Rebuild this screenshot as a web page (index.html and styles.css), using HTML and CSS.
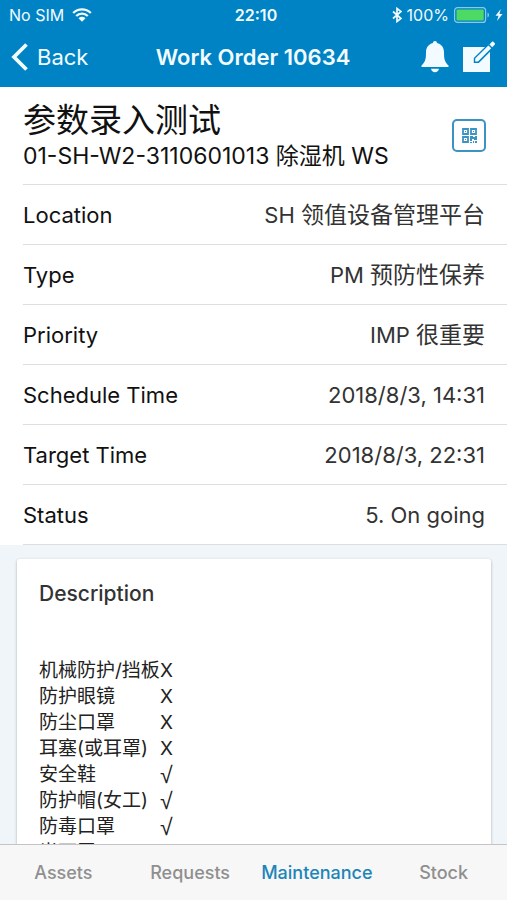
FILE: index.html
```html
<!DOCTYPE html>
<html lang="en">
<head>
<meta charset="utf-8">
<meta name="viewport" content="width=device-width, initial-scale=1">
<title>Work Order 10634</title>
<link rel="stylesheet" href="styles.css">
</head>
<body>
<header class="header">
  <div class="status">
    <div class="status-side">
      <span>No SIM</span>
      <svg class="wifi" viewBox="0 0 20 14" aria-hidden="true">
        <path d="M1.200 5a12.500 12.500 0 0 1 17.600 0M4.200 8a8.300 8.300 0 0 1 11.600 0" fill="none" stroke="currentColor" stroke-width="2.300"/>
        <path d="M6.500 10.200a5 5 0 0 1 7 0L10 13.800z" fill="currentColor"/>
      </svg>
    </div>
    <span class="clock">22:10</span>
    <div class="status-side status-end">
      <svg class="bluetooth" viewBox="0 0 10 16" aria-hidden="true">
        <path d="M1 4.500l8 7-4 3V1.500l4 3-8 7" fill="none" stroke="currentColor" stroke-width="1.700"/>
      </svg>
      <span>100%</span>
      <svg class="battery" viewBox="0 0 36 16" aria-hidden="true">
        <rect x=".6" y=".6" width="31" height="14.800" rx="3" fill="none" stroke="#8cc8e6" stroke-width="1.200"/>
        <rect x="2.500" y="2.500" width="27.200" height="11" rx="1" fill="#4cd964"/>
        <path d="M33.500 5.500c2 .8 2 4.200 0 5z" fill="#8cc8e6"/>
      </svg>
      <svg class="bolt" viewBox="0 0 8 12" aria-hidden="true"><path d="M5.800 0L.5 6.800h3L2 12l5.500-7H4.400z" fill="currentColor"/></svg>
    </div>
  </div>
  <div class="nav">
    <button class="back" type="button">
      <svg viewBox="0 0 18 28" aria-hidden="true"><path d="M15.500 1.500L3 14l12.500 12.500" fill="none" stroke="currentColor" stroke-width="3.800"/></svg>
      <span>Back</span>
    </button>
    <h1>Work Order 10634</h1>
    <div class="actions">
      <button type="button" aria-label="Notifications">
        <svg class="bell" viewBox="0 0 28 32" aria-hidden="true">
          <path d="M14 0c-1.300 0-2 .9-2 2C7.500 3 5 6.700 5 11.300c0 6.700-.6 9.700-4.500 13.200V26h27v-1.500C23.600 21 23 18 23 11.300 23 6.700 20.500 3 16 2c0-1.100-.7-2-2-2zM10 27.800c.4 2 2 3.400 4 3.400s3.600-1.400 4-3.400z" fill="currentColor"/>
        </svg>
      </button>
      <button type="button" aria-label="Edit">
        <svg class="edit" viewBox="0 0 32 32" aria-hidden="true">
          <path d="M0 6h22L10.800 17v5h5L27 10.800V31H0z" fill="currentColor"/>
          <path d="M12.200 17.600L25.400 4.400l2.800 2.800L15 20.400h-2.800zM26.400 3.400l2.400-2.400c.6-.6 1.100-.6 1.700 0l1.100 1.100c.6.6.6 1.100 0 1.700l-2.400 2.400z" fill="currentColor"/>
        </svg>
      </button>
    </div>
  </div>
</header>

<main class="content">
  <section class="sheet">
    <div class="summary">
      <div>
        <h2 lang="zh-CN">参数录入测试</h2>
        <p>01-SH-W2-3110601013 除湿机 WS</p>
      </div>
      <button class="qr" type="button" aria-label="Scan code">
        <svg viewBox="0 0 15 15" aria-hidden="true">
          <path d="M1 1h5v5H1zM9 1h5v5H9zM1 9h5v5H1z" fill="none" stroke="currentColor" stroke-width="1.800"/>
          <path d="M3 3h1v1H3zM11 3h1v1h-1zM3 11h1v1H3zM8 8h3v1h2V8h2v4h-3v-1h-2v2H8zM8 14h2v1H8zM11 13h1v2h-1zM13 13h2v2h-2z" fill="currentColor"/>
        </svg>
      </button>
    </div>
    <dl class="fields">
      <div class="field"><dt>Location</dt><dd>SH <span lang="zh-CN">领值设备管理平台</span></dd></div>
      <div class="field"><dt>Type</dt><dd>PM <span lang="zh-CN">预防性保养</span></dd></div>
      <div class="field"><dt>Priority</dt><dd>IMP <span lang="zh-CN">很重要</span></dd></div>
      <div class="field"><dt>Schedule Time</dt><dd>2018/8/3, 14:31</dd></div>
      <div class="field"><dt>Target Time</dt><dd>2018/8/3, 22:31</dd></div>
      <div class="field"><dt>Status</dt><dd>5. On going</dd></div>
    </dl>
  </section>

  <section class="card">
    <h3>Description</h3>
    <table class="checks" lang="zh-CN">
      <tbody>
        <tr><th scope="row">机械防护/挡板</th><td>X</td></tr>
        <tr><th scope="row">防护眼镜</th><td>X</td></tr>
        <tr><th scope="row">防尘口罩</th><td>X</td></tr>
        <tr><th scope="row">耳塞(或耳罩)</th><td>X</td></tr>
        <tr><th scope="row">安全鞋</th><td class="tick">√</td></tr>
        <tr><th scope="row">防护帽(女工)</th><td class="tick">√</td></tr>
        <tr><th scope="row">防毒口罩</th><td class="tick">√</td></tr>
        <tr><th scope="row">半面罩</th><td></td></tr>
      </tbody>
    </table>
  </section>
</main>

<nav class="tabs">
  <a href="#assets">Assets</a>
  <a href="#requests">Requests</a>
  <a href="#maintenance" class="active" aria-current="page">Maintenance</a>
  <a href="#stock">Stock</a>
</nav>
</body>
</html>
```
FILE: styles.css
```css
* {
  box-sizing: border-box;
  margin: 0;
  padding: 0;
}

body {
  display: flex;
  flex-direction: column;
  height: 100vh;
  overflow: hidden;
  background: #f0f5f9;
  color: #111;
  font: 22px/28px Inter, "Noto Sans CJK SC", sans-serif;
}

button {
  border: 0;
  background: none;
  color: inherit;
  font: inherit;
}

svg {
  display: block;
  flex: none;
}

h1, h2, h3, th {
  font-weight: 400;
}

.header {
  flex: none;
  background: #0083c5;
  color: #f2fbff;
}

.status {
  display: flex;
  align-items: center;
  height: 28px;
  padding: 2px 4px 0 9px;
  font-size: 16px;
  line-height: 24px;
}

.status-side {
  display: flex;
  flex: 1;
  align-items: center;
  gap: 8px;
}

.status-end {
  justify-content: flex-end;
  gap: 5px;
}

.clock {
  font-weight: 600;
}

.wifi {
  width: 20px;
  height: 14px;
}

.bluetooth {
  width: 10px;
  height: 16px;
}

.battery {
  width: 36px;
  height: 16px;
}

.bolt {
  width: 8px;
  height: 12px;
}

.nav {
  display: grid;
  grid-template-columns: 1fr auto 1fr;
  align-items: center;
  height: 59px;
  padding: 0 12px 2px 11px;
}

.nav h1 {
  font-size: 22px;
  font-weight: 600;
}

.back {
  display: flex;
  align-items: center;
  gap: 8px;
}

.back svg {
  width: 18px;
  height: 28px;
}

.actions {
  display: flex;
  justify-content: flex-end;
  gap: 14px;
}

.bell {
  width: 28px;
  height: 32px;
}

.edit {
  width: 32px;
  height: 32px;
}

.content {
  flex: 1;
  min-height: 0;
  overflow: hidden;
}

.sheet {
  padding-left: 23px;
  background: #fff;
}

.summary {
  display: flex;
  align-items: center;
  justify-content: space-between;
  height: 98px;
  padding-right: 21px;
  border-bottom: 1px solid #dedede;
}

.summary h2 {
  font-size: 33px;
  line-height: 40px;
}

.summary p {
  font-size: 23px;
  line-height: 32px;
}

.qr {
  display: grid;
  place-items: center;
  width: 34px;
  height: 33px;
  border: 2px solid #3a93c2;
  border-radius: 5px;
  color: #3a93c2;
}

.qr svg {
  width: 15px;
  height: 15px;
}

.field {
  display: flex;
  align-items: center;
  justify-content: space-between;
  height: 60px;
  padding-right: 22px;
  border-bottom: 1px solid #dedede;
}

.field dd {
  color: #333;
}

.field dd span {
  font-size: 23px;
}

.card {
  margin: 14px 16px 0 17px;
  padding: 21px 22px;
  border-radius: 3px;
  background: #fff;
  box-shadow: 0 1px 3px rgba(0, 0, 0, 0.3);
}

.card h3 {
  color: #333;
  font-size: 21px;
  font-weight: 500;
}

.checks {
  margin-top: 50px;
  border-collapse: collapse;
  color: #222;
  font-size: 19px;
  line-height: 26px;
}

.checks th {
  min-width: 121px;
  text-align: left;
}

.checks .tick {
  font-family: "Liberation Sans", sans-serif;
  font-size: 23px;
}

.tabs {
  display: grid;
  flex: none;
  grid-template-columns: repeat(4, 1fr);
  align-items: center;
  height: 56px;
  border-top: 1px solid #c4c4c6;
  background: #f7f7f7;
  font-size: 18px;
  font-weight: 500;
  text-align: center;
}

.tabs a {
  color: #8f8f8f;
  text-decoration: none;
}

.tabs .active {
  color: #2184b8;
}
```
